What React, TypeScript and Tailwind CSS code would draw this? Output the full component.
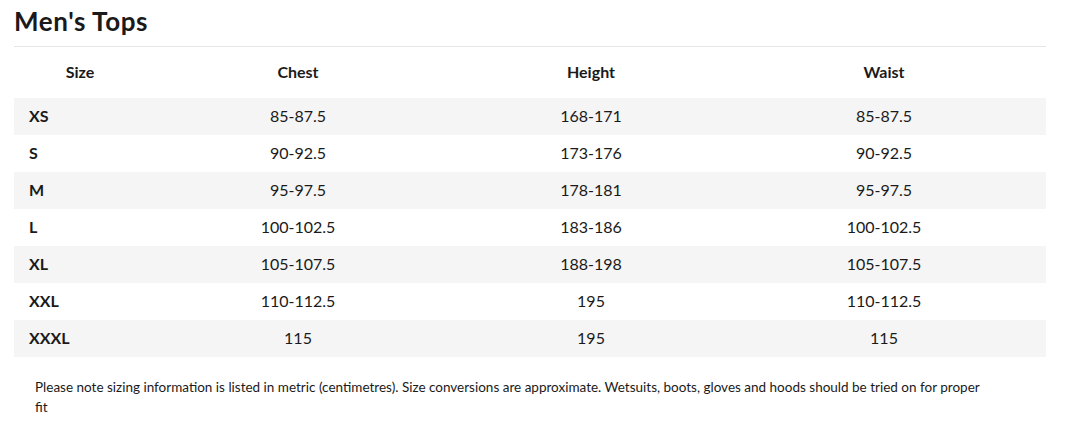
import React from "react";

const rows = [
  ["XS", "85-87.5", "168-171", "85-87.5"],
  ["S", "90-92.5", "173-176", "90-92.5"],
  ["M", "95-97.5", "178-181", "95-97.5"],
  ["L", "100-102.5", "183-186", "100-102.5"],
  ["XL", "105-107.5", "188-198", "105-107.5"],
  ["XXL", "110-112.5", "195", "110-112.5"],
  ["XXXL", "115", "195", "115"],
];

export default function App() {
  return (
    <div className="w-[1068px] h-[441px] bg-white text-[#1a1a1a] px-[14px] pt-[4px]" style={{ fontFamily: "Lato, 'Noto Sans', sans-serif" }}>
      <h1 className="text-[26px] font-bold leading-[34px] h-[42px] tracking-[0.6px]">Men's Tops</h1>
      <div className="w-[1032px] border-t border-[#e6e6e6]">
        <div className="grid grid-cols-[132px_304px_282px_304px] h-[51px] items-center text-[16px] font-bold pb-[2px]">
          <div className="text-center">Size</div>
          <div className="text-center">Chest</div>
          <div className="text-center">Height</div>
          <div className="text-center">Waist</div>
        </div>
        {rows.map((r, i) => (
          <div
            key={r[0]}
            className={`grid grid-cols-[132px_304px_282px_304px] h-[37px] items-center text-[16px] pb-[2px] ${i % 2 === 0 ? "bg-[#f5f5f5]" : "bg-white"}`}
          >
            <div className="pl-[15px] font-bold">{r[0]}</div>
            <div className="text-center">{r[1]}</div>
            <div className="text-center">{r[2]}</div>
            <div className="text-center">{r[3]}</div>
          </div>
        ))}
      </div>
      <p className="mt-[20px] pl-[21px] pr-[55px] w-[1032px] text-[13.5px] leading-[20px]">
        Please note sizing information is listed in metric (centimetres). Size conversions are approximate. Wetsuits, boots, gloves and hoods should be tried on for proper fit
      </p>
    </div>
  );
}
